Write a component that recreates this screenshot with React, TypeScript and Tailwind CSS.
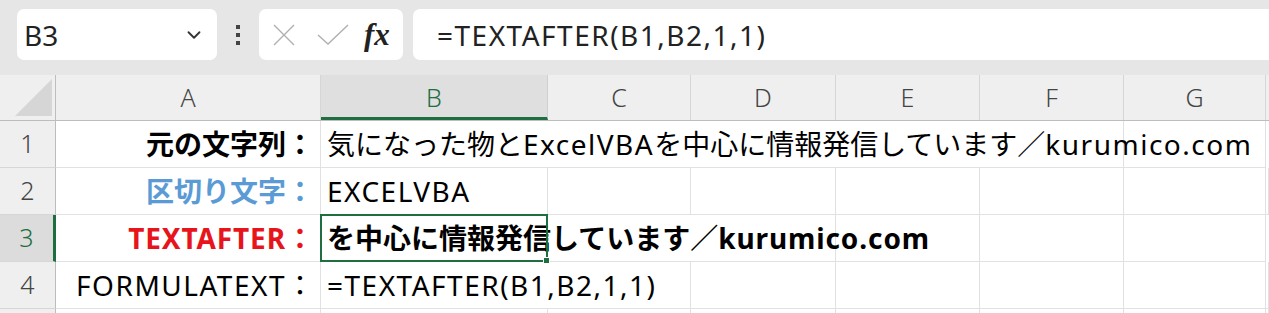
import { ChevronDown } from "lucide-react";

const font = "font-['Noto_Sans','Noto_Sans_CJK_JP',sans-serif]";
const cols = ["A", "B", "C", "D", "E", "F", "G"];
const grid = "grid grid-cols-[56px_265px_227px_143px_145px_144px_144px_142px_1fr]";

// latin runs are set a touch wider, like the spreadsheet's own font
const Lat = ({ children, bold }: { children: React.ReactNode; bold?: boolean }) => (
  <span className={bold ? "tracking-[0.9px]" : "tracking-[1.5px]"}>{children}</span>
);

const Toolbar = () => (
  <div className="flex h-[75px] items-start bg-[#e6e6e6] pt-[9px]">
    <div className="ml-[17px] flex h-[51px] w-[200px] items-center justify-between rounded-[7px] bg-white pl-[7px] pr-[12px]">
      <span className="text-[28px] leading-none text-[#222]">B3</span>
      <ChevronDown size={22} strokeWidth={2} className="text-[#333]" />
    </div>
    <div className="flex h-[51px] w-[42px] flex-col items-center justify-center gap-[4px]">
      <span className="h-[4px] w-[4px] bg-[#444]" />
      <span className="h-[4px] w-[4px] bg-[#444]" />
      <span className="h-[4px] w-[4px] bg-[#444]" />
    </div>
    <div className="flex h-[51px] w-[144px] items-center rounded-[7px] bg-white pl-[12px]">
      <svg width="24" height="24" viewBox="0 0 24 24" className="ml-[1px]">
        <path d="M2 2 L22 22 M22 2 L2 22" stroke="#b0b0b0" strokeWidth="1.4" fill="none" />
      </svg>
      <svg width="34" height="24" viewBox="0 0 34 24" className="ml-[20px]">
        <path d="M2 12 L12 21 L32 2" stroke="#b0b0b0" strokeWidth="1.4" fill="none" />
      </svg>
      <span className="ml-[14px] font-['Liberation_Serif',serif] text-[31px] font-bold italic leading-none text-[#222]">
        fx
      </span>
    </div>
    <div className="ml-[10px] flex h-[51px] flex-1 items-center rounded-l-[7px] bg-white pl-[24px]">
      <span className="text-[28px] leading-none text-[#222]">
        <Lat>=TEXTAFTER(B1,B2,1,1)</Lat>
      </span>
    </div>
  </div>
);

const HeaderRow = () => (
  <div className={`${grid} h-[46px] border-b border-[#bdbdbd] bg-[#efefef]`}>
    <div className="flex items-end justify-end border-r border-[#bdbdbd] pb-[4px] pr-[3px]">
      <svg width="37" height="37" viewBox="0 0 37 37">
        <polygon points="37,0 37,37 0,37" fill="#d6d6d6" />
      </svg>
    </div>
    {cols.map((c) => (
      <div
        key={c}
        className={
          c === "B"
            ? "flex items-center justify-center border-b-[3px] border-r border-b-[#1e6e42] border-r-[#d0d0d0] bg-[#dfdfdf] pt-[3px] text-[25px] font-light text-[#1e6e42]"
            : "flex items-center justify-center border-r border-[#d6d6d6] text-[25px] font-light text-[#444]"
        }
      >
        {c}
      </div>
    ))}
    <div />
  </div>
);

const RowHead = ({ n, active }: { n?: number; active?: boolean }) => (
  <div
    className={
      active
        ? "flex items-center justify-center border-b border-r-[3px] border-b-[#d6d6d6] border-r-[#1e6e42] bg-[#dcdcdc] text-[25px] font-light text-[#1e6e42]"
        : "flex items-center justify-center border-b border-r border-b-[#d6d6d6] border-r-[#bdbdbd] bg-[#efefef] text-[25px] font-light text-[#444]"
    }
  >
    {n}
  </div>
);

const Cell = ({ children, className = "" }: { children?: React.ReactNode; className?: string }) => (
  <div className={`flex items-center overflow-visible whitespace-nowrap border-b border-r border-[#e1e1e1] ${className}`}>
    {children}
  </div>
);

export default function App() {
  return (
    <div className={`${font} h-[313px] w-[1269px] overflow-hidden bg-white text-[28px] text-black`}>
      <Toolbar />
      <HeaderRow />

      <div className={`${grid} h-[47px]`}>
        <RowHead n={1} />
        <Cell className="justify-end pr-[6px] font-bold">元の文字列：</Cell>
        <Cell className="col-span-5 pl-[6px]">
          気になった物と<Lat>ExcelVBA</Lat>を中心に情報発信しています／<Lat>kurumico.com</Lat>
        </Cell>
        <Cell />
      </div>

      <div className={`${grid} h-[47px]`}>
        <RowHead n={2} />
        <Cell className="justify-end pr-[6px] font-bold text-[#5b9bd5]">区切り文字：</Cell>
        <Cell className="pl-[6px]">
          <Lat>EXCELVBA</Lat>
        </Cell>
        <Cell />
        <Cell />
        <Cell />
        <Cell />
        <Cell />
        <Cell />
      </div>

      <div className={`${grid} h-[47px]`}>
        <RowHead n={3} active />
        <Cell className="justify-end pr-[6px] font-bold text-[#e8141c]">
          <Lat bold>TEXTAFTER</Lat>：
        </Cell>
        <Cell className="relative col-span-3 pl-[6px] font-bold">
          を中心に情報発信しています／<Lat bold>kurumico.com</Lat>
          <div className="absolute left-[-1px] top-[-1px] h-[48px] w-[228px] border-2 border-[#1e6e42]" />
          <div className="absolute left-[222px] top-[42px] h-[7px] w-[7px] border border-white bg-[#1e6e42]" />
        </Cell>
        <Cell />
        <Cell />
        <Cell />
      </div>

      <div className={`${grid} h-[47px]`}>
        <RowHead n={4} />
        <Cell className="justify-end pr-[6px]">
          <Lat>FORMULATEXT</Lat>：
        </Cell>
        <Cell className="col-span-2 pl-[6px]">
          <Lat>=TEXTAFTER(B1,B2,1,1)</Lat>
        </Cell>
        <Cell />
        <Cell />
        <Cell />
        <Cell />
        <Cell />
      </div>

      <div className={`${grid} h-[47px]`}>
        <RowHead />
        <Cell />
        <Cell />
        <Cell />
        <Cell />
        <Cell />
        <Cell />
        <Cell />
        <Cell />
      </div>
    </div>
  );
}
